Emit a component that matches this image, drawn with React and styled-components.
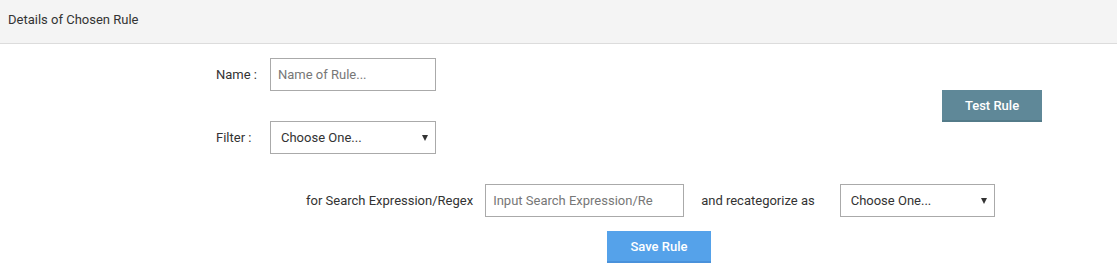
import styled, { createGlobalStyle } from 'styled-components';

const GlobalStyle = createGlobalStyle`
  body {
    margin: 0;
    background: #fff;
    font-family: Roboto, "Liberation Sans", Arial, sans-serif;
    color: #333;
  }
`;

export default function App() {
  return (
    <>
      <GlobalStyle />
      <Panel>
        <Header>Details of Chosen Rule</Header>
        <Body>
          <TopSection>
            <Fields>
              <FieldRow>
                <Label>Name :</Label>
                <Input type="text" placeholder="Name of Rule..." width={166} />
              </FieldRow>
              <FieldRow>
                <Label>Filter :</Label>
                <SelectWrap width={166}>
                  <Select defaultValue="">
                    <option value="">Choose One...</option>
                  </Select>
                </SelectWrap>
              </FieldRow>
            </Fields>
            <Button tone="slate">Test Rule</Button>
          </TopSection>
          <ExpressionRow>
            <InlineLabel>for Search Expression/Regex</InlineLabel>
            <Input
              type="text"
              placeholder="Input Search Expression/Regex"
              width={199}
              padRight={30}
            />
            <InlineLabel gap={17}>and recategorize as</InlineLabel>
            <SelectWrap width={155} gap={13}>
              <Select defaultValue="">
                <option value="">Choose One...</option>
              </Select>
            </SelectWrap>
          </ExpressionRow>
          <SaveRow>
            <Button tone="blue" wide>Save Rule</Button>
          </SaveRow>
        </Body>
      </Panel>
    </>
  );
}

const Panel = styled.div`
  width: 1117px;
  height: 277px;
  overflow: hidden;
`;
const Header = styled.div`
  height: 44px;
  box-sizing: border-box;
  padding: 12px 0 0 8px;
  background: #f4f4f4;
  border-bottom: 1px solid #dcdcdc;
  font-size: 13px;
  line-height: 15px;
  color: #333;
`;
const Body = styled.div`
  padding-top: 14px;
`;
const TopSection = styled.div`
  display: flex;
  align-items: center;
  padding-left: 216px;
`;
const Fields = styled.div`
  display: flex;
  flex-direction: column;
  gap: 30px;
  width: 726px;
`;
const FieldRow = styled.div`
  display: flex;
  align-items: center;
`;
const Label = styled.label`
  width: 54px;
  font-size: 13px;
  color: #333;
`;
const InlineLabel = styled.span`
  font-size: 13px;
  color: #333;
  margin-left: ${(p) => p.gap || 0}px;
  margin-right: 12px;
`;
const Input = styled.input`
  box-sizing: border-box;
  width: ${(p) => p.width}px;
  height: 33px;
  border: 1px solid #aaa;
  border-radius: 0;
  padding: 0 ${(p) => p.padRight || 7}px 0 7px;
  font-family: inherit;
  font-size: 13px;
  color: #333;
  outline: none;

  &::placeholder {
    color: #777;
  }
`;
const SelectWrap = styled.div`
  position: relative;
  width: ${(p) => p.width}px;
  margin-left: ${(p) => p.gap || 0}px;

  &::after {
    content: '';
    position: absolute;
    right: 8px;
    top: 14px;
    border-left: 3px solid transparent;
    border-right: 3px solid transparent;
    border-top: 6px solid #333;
    pointer-events: none;
  }
`;
const Select = styled.select`
  appearance: none;
  box-sizing: border-box;
  width: 100%;
  height: 33px;
  border: 1px solid #aaa;
  border-radius: 0;
  background: #fff;
  padding: 0 10px;
  font-family: inherit;
  font-size: 13px;
  color: #333;
  outline: none;
`;
const ExpressionRow = styled.div`
  display: flex;
  align-items: center;
  margin-top: 30px;
  padding-left: 306px;
`;
const SaveRow = styled.div`
  display: flex;
  margin-top: 14px;
  padding-left: 607px;
`;
const Button = styled.button`
  box-sizing: border-box;
  width: ${(p) => (p.wide ? 104 : 100)}px;
  height: 32px;
  border: none;
  border-bottom: 2px solid ${(p) => (p.tone === 'blue' ? '#4a92db' : '#537b89')};
  background: ${(p) => (p.tone === 'blue' ? '#55a2ea' : '#5f8898')};
  color: #fff;
  font-family: inherit;
  font-size: 13px;
  font-weight: 500;
  cursor: pointer;
`;
